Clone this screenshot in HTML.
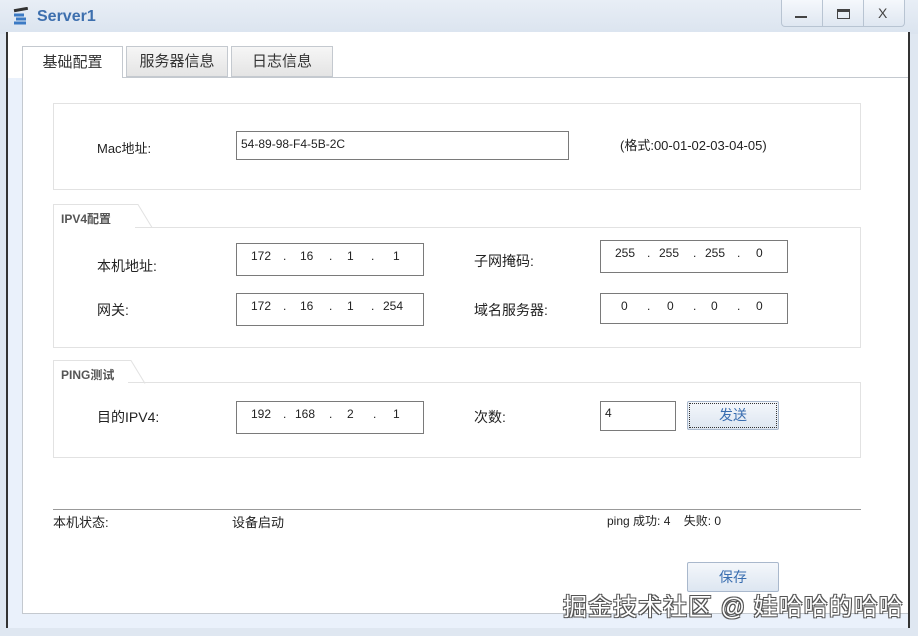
<!DOCTYPE html>
<html><head><meta charset="utf-8"><style>
*{margin:0;padding:0;box-sizing:border-box}
body{width:918px;height:636px;overflow:hidden;background:#dfe7f1;font-family:"Liberation Sans","Noto Sans CJK SC",sans-serif;font-size:13px;color:#222;position:relative}
.a{position:absolute}
.inp{position:absolute;border:1px solid #7a7a7a;background:#fff;font-size:12px}
.ip span{position:absolute;top:5px}
.lbl{position:absolute;font-size:13px}
.grp{position:absolute;border:1px solid #e2e2e2;background:#fff}
.gt{position:absolute;font-weight:bold;font-size:12px;color:#555;background:#fff;border:1px solid #e2e2e2;border-bottom:none;border-right:none;padding:5px 8px 0 7px;height:24px}
.btn{position:absolute;border:1px solid #a9b8cc;border-radius:2px;background:linear-gradient(#f4f7fb,#dde6f1);color:#3a6eb0;text-align:center;font-size:14px}
</style></head><body>
<div class="a" style="left:0;top:0;width:918px;height:34px;background:linear-gradient(#e8eef6,#dbe4ef)"></div>
<svg class="a" style="left:10px;top:7px" width="22" height="22" viewBox="0 0 22 22"><rect x="4" y="1" width="14" height="3" fill="#333" transform="rotate(-10 11 3)"/><path d="M4 8h10M6 12h10M4 16h12" stroke="#3c7ac4" stroke-width="3"/></svg>
<div class="a" style="left:37px;top:8px;font-size:16px;font-weight:bold;color:#3d6fae">Server1</div>
<div class="a" style="left:781px;top:0;width:124px;height:27px;border:1px solid #b8c4d2;border-top:none;border-radius:0 0 4px 4px;background:linear-gradient(#f5f8fc,#dfe7f1)"></div>
<div class="a" style="left:822px;top:0;width:1px;height:27px;background:#b8c4d2"></div>
<div class="a" style="left:863px;top:0;width:1px;height:27px;background:#b8c4d2"></div>
<div class="a" style="left:795px;top:16px;width:12px;height:2px;background:#444"></div>
<div class="a" style="left:837px;top:9px;width:13px;height:10px;border:1px solid #444;border-top:3px solid #444"></div>
<div class="a" style="left:878px;top:5px;font-size:14px;color:#444">X</div>
<div class="a" style="left:6px;top:32px;width:904px;height:596px;background:#eaf1fb;border-left:2px solid #333;border-right:2px solid #333"></div>
<div class="a" style="left:8px;top:32px;width:900px;height:46px;background:#fff"></div>
<div class="a" style="left:22px;top:77px;width:886px;height:537px;background:#fff;border:1px solid #c4c9cf;border-right:none"></div>
<div class="a" style="left:22px;top:46px;width:101px;height:32px;background:#fff;border:1px solid #c4c9cf;border-bottom:none;text-align:center;line-height:31px;font-size:15px;color:#333">基础配置</div>
<div class="a" style="left:126px;top:46px;width:102px;height:31px;background:linear-gradient(#f6f6f6,#e4e4e4);border:1px solid #c4c9cf;text-align:center;line-height:30px;font-size:15px;color:#333">服务器信息</div>
<div class="a" style="left:231px;top:46px;width:102px;height:31px;background:linear-gradient(#f6f6f6,#e4e4e4);border:1px solid #c4c9cf;text-align:center;line-height:30px;font-size:15px;color:#333">日志信息</div>

<div class="grp" style="left:53px;top:103px;width:808px;height:87px"></div>
<div class="lbl" style="left:97px;top:138px">Mac地址:</div>
<div class="inp" style="left:236px;top:131px;width:333px;height:29px;padding:5px 4px">54-89-98-F4-5B-2C</div>
<div class="lbl" style="left:620px;top:135px;font-size:13px">(格式:00-01-02-03-04-05)</div>

<div class="grp" style="left:53px;top:227px;width:808px;height:121px"></div>
<div class="gt" style="left:53px;top:204px;width:82px">IPV4配置</div>
<svg class="a" style="left:134px;top:204px" width="20" height="24"><path d="M0 0.5L4 0.5L18 23.5" stroke="#e2e2e2" fill="#fff"/></svg>
<div class="lbl" style="left:97px;top:256px;font-size:14px">本机地址:</div>
<div class="lbl" style="left:97px;top:300px;font-size:14px">网关:</div>
<div class="lbl" style="left:474px;top:251px;font-size:14px">子网掩码:</div>
<div class="lbl" style="left:474px;top:300px;font-size:14px">域名服务器:</div>
<div class="inp ip" style="left:236px;top:243px;width:188px;height:33px"><span style="left:14px">172</span><span style="left:46px">.</span><span style="left:63px">16</span><span style="left:92px">.</span><span style="left:110px">1</span><span style="left:134px">.</span><span style="left:156px">1</span></div>
<div class="inp ip" style="left:236px;top:293px;width:188px;height:33px"><span style="left:14px">172</span><span style="left:46px">.</span><span style="left:63px">16</span><span style="left:92px">.</span><span style="left:110px">1</span><span style="left:134px">.</span><span style="left:146px">254</span></div>
<div class="inp ip" style="left:600px;top:240px;width:188px;height:33px"><span style="left:14px">255</span><span style="left:46px">.</span><span style="left:58px">255</span><span style="left:92px">.</span><span style="left:104px">255</span><span style="left:136px">.</span><span style="left:155px">0</span></div>
<div class="inp ip" style="left:600px;top:293px;width:188px;height:31px"><span style="left:20px">0</span><span style="left:46px">.</span><span style="left:66px">0</span><span style="left:92px">.</span><span style="left:110px">0</span><span style="left:136px">.</span><span style="left:155px">0</span></div>

<div class="grp" style="left:53px;top:382px;width:808px;height:76px"></div>
<div class="gt" style="left:53px;top:360px;width:75px">PING测试</div>
<svg class="a" style="left:127px;top:360px" width="20" height="24"><path d="M0 0.5L4 0.5L18 23.5" stroke="#e2e2e2" fill="#fff"/></svg>
<div class="lbl" style="left:97px;top:407px;font-size:14px">目的IPV4:</div>
<div class="inp ip" style="left:236px;top:401px;width:188px;height:33px"><span style="left:14px">192</span><span style="left:46px">.</span><span style="left:58px">168</span><span style="left:92px">.</span><span style="left:110px">2</span><span style="left:136px">.</span><span style="left:156px">1</span></div>
<div class="lbl" style="left:474px;top:407px;font-size:14px">次数:</div>
<div class="inp" style="left:600px;top:401px;width:76px;height:30px;padding:4px 4px">4</div>
<div class="btn" style="left:687px;top:401px;width:92px;height:29px;line-height:26px;outline:1px dotted #333;outline-offset:-3px">发送</div>

<div class="a" style="left:53px;top:509px;width:808px;height:1px;background:#999"></div>
<div class="lbl" style="left:53px;top:512px">本机状态:</div>
<div class="lbl" style="left:232px;top:512px">设备启动</div>
<div class="lbl" style="left:607px;top:512px;font-size:12px">ping 成功: 4&nbsp;&nbsp;&nbsp;&nbsp;失败: 0</div>
<div class="btn" style="left:687px;top:562px;width:92px;height:30px;line-height:28px">保存</div>
<div class="a" style="left:563px;top:587px;font-size:24px;letter-spacing:1px;white-space:nowrap;color:#fff;text-shadow:-1px -1px 0 #555,1px -1px 0 #555,-1px 1px 0 #555,1px 1px 0 #555">掘金技术社区 @ 娃哈哈的哈哈</div>
</body></html>
